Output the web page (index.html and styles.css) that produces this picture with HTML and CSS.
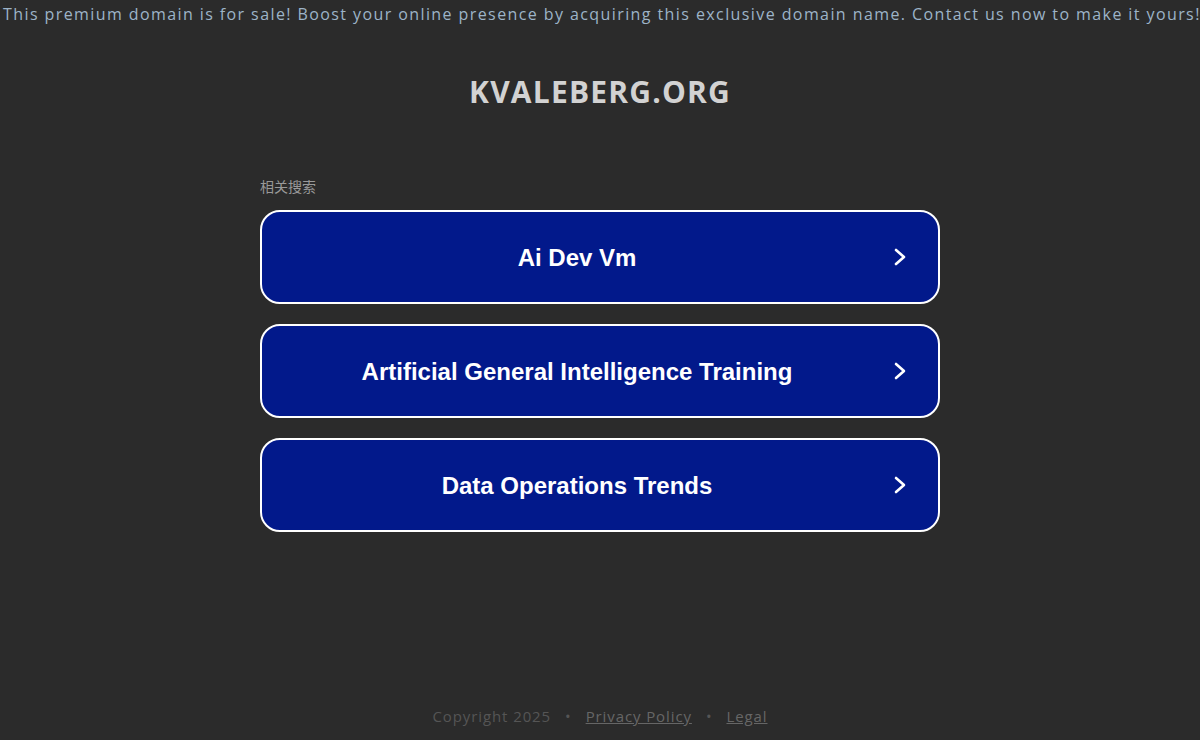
FILE: index.html
```html
<!DOCTYPE html>
<html lang="en">
<head>
<meta charset="utf-8">
<title>kvaleberg.org</title>
<link rel="stylesheet" href="styles.css">
</head>
<body>
<div class="page">
  <div class="banner">This premium domain is for sale! Boost your online presence by acquiring this exclusive domain name. Contact us now to make it yours!</div>
  <h1 class="domain">KVALEBERG.ORG</h1>
  <main class="related">
    <div class="related-title">相关搜索</div>
    <div class="links">
      <a class="link" href="#"><span class="link-text">Ai Dev Vm</span><svg class="chev" viewBox="0 0 16 20" width="16" height="20"><path d="M4 3 L12 10 L4 17" fill="none" stroke="#fff" stroke-width="2.6" stroke-linecap="round" stroke-linejoin="round"/></svg></a>
      <a class="link" href="#"><span class="link-text">Artificial General Intelligence Training</span><svg class="chev" viewBox="0 0 16 20" width="16" height="20"><path d="M4 3 L12 10 L4 17" fill="none" stroke="#fff" stroke-width="2.6" stroke-linecap="round" stroke-linejoin="round"/></svg></a>
      <a class="link" href="#"><span class="link-text">Data Operations Trends</span><svg class="chev" viewBox="0 0 16 20" width="16" height="20"><path d="M4 3 L12 10 L4 17" fill="none" stroke="#fff" stroke-width="2.6" stroke-linecap="round" stroke-linejoin="round"/></svg></a>
    </div>
  </main>
  <footer class="footer">
    <span class="copy">Copyright 2025</span>
    <span class="dot">•</span>
    <a class="flink" href="#">Privacy Policy</a>
    <span class="dot">•</span>
    <a class="flink" href="#">Legal</a>
  </footer>
</div>
</body>
</html>
```

FILE: styles.css
```css
html, body {
  margin: 0;
  padding: 0;
  background: #2b2b2b;
  height: 100%;
  overflow: hidden;
}

.page {
  height: 740px;
  display: flex;
  flex-direction: column;
  align-items: center;
}

.banner {
  align-self: stretch;
  font-family: "Open Sans", "Noto Sans", sans-serif;
  font-size: 16px;
  line-height: 28px;
  color: #9db4c8;
  white-space: nowrap;
  overflow: hidden;
  padding-left: 3px;
  letter-spacing: 1.41px;
}

.domain {
  margin: 44px 0 0;
  font-family: "Open Sans", "Noto Sans", sans-serif;
  font-weight: 700;
  font-size: 30px;
  line-height: 40px;
  color: #d2d2d2;
  letter-spacing: 1.2px;
}

.related {
  width: 680px;
  margin-top: 65px;
}

.related-title {
  font-family: "Noto Sans CJK SC", "Noto Sans", sans-serif;
  font-size: 14px;
  line-height: 18px;
  color: #999;
  margin-bottom: 15px;
}

.links {
  display: flex;
  flex-direction: column;
  gap: 20px;
}

.link {
  display: flex;
  align-items: center;
  height: 94px;
  box-sizing: border-box;
  border: 2px solid #fff;
  border-radius: 20px;
  background: #02198b;
  text-decoration: none;
  padding-right: 30px;
}

.link-text {
  flex: 1;
  text-align: center;
  font-family: "Liberation Sans", Arial, sans-serif;
  font-weight: 700;
  font-size: 24px;
  color: #fff;
  padding-top: 2px;
}

.chev {
  display: block;
  flex: none;
}

.footer {
  margin-top: auto;
  margin-bottom: 14px;
  font-family: "Open Sans", "Noto Sans", sans-serif;
  font-size: 15px;
  line-height: 20px;
  color: #555;
  letter-spacing: 0.9px;
  display: flex;
  gap: 14px;
}

.flink {
  color: #666;
  text-decoration: underline;
}

.dot {
  color: #555;
  font-size: 15px;
}
```
